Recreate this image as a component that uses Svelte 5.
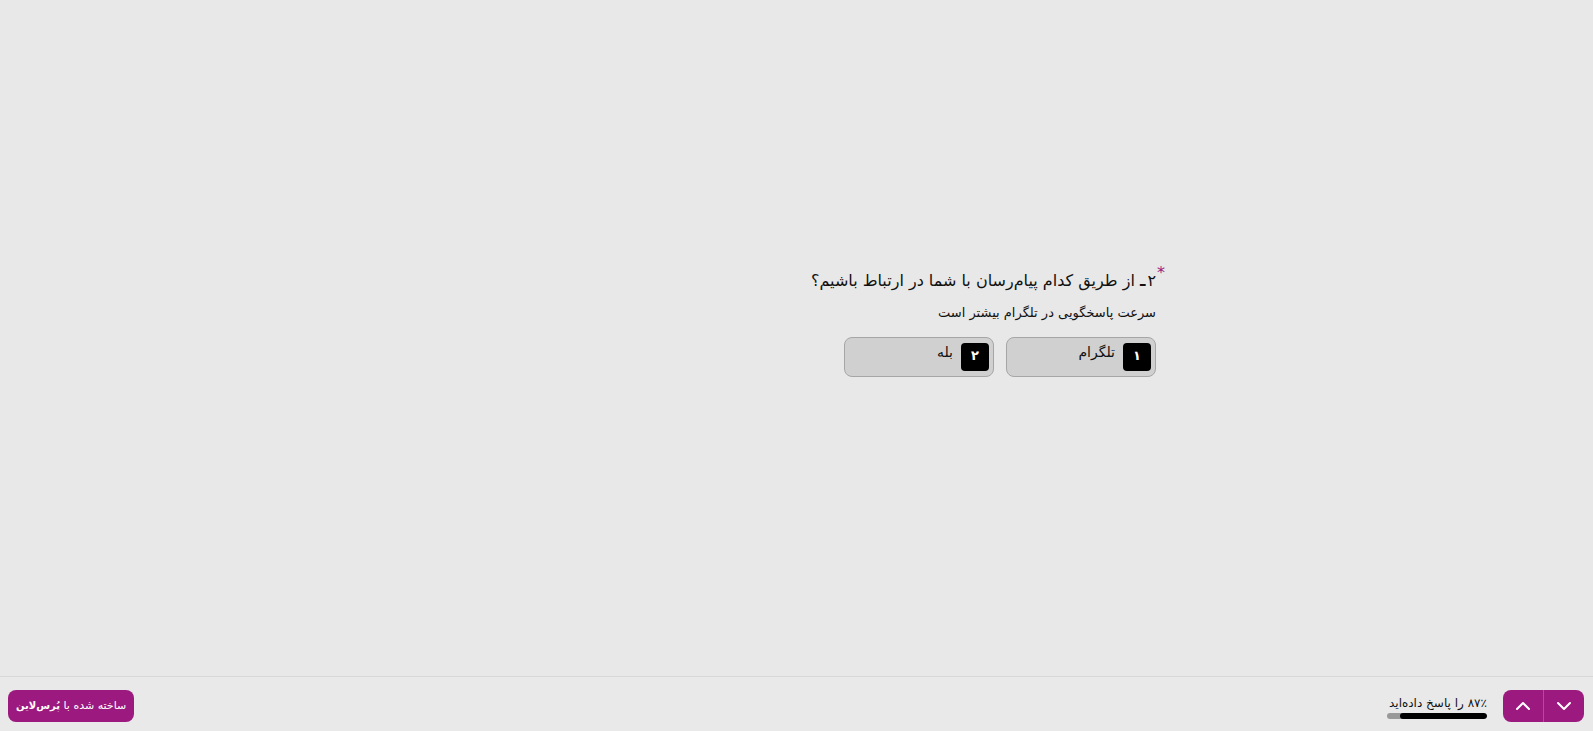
<script>
  const question = {
    number: '۲',
    title: 'از طریق کدام پیام‌رسان با شما در ارتباط باشیم؟',
    description: 'سرعت پاسخگویی در تلگرام بیشتر است',
    required: true,
    choices: [
      { id: 1, key: '۱', label: 'تلگرام' },
      { id: 2, key: '۲', label: 'بله' },
    ],
  };

  let selected = $state(null);
  let progress = $state(87);

  const toPersian = (n) => String(n).replace(/\d/g, (d) => '۰۱۲۳۴۵۶۷۸۹'[d]);
</script>

<div class="survey" dir="rtl" lang="fa">
  <main>
    <form class="question">
      <h1>
        {#if question.required}<span class="required">*</span>{/if}
        <span class="number">{question.number}<span class="dash">ـ</span></span>
        {question.title}
      </h1>
      <p class="description">{question.description}</p>
      <div class="choices">
        {#each question.choices as choice (choice.id)}
          <label class="choice">
            <input type="radio" name="messenger" value={choice.id} bind:group={selected} />
            <span class="key">{choice.key}</span>
            <span class="text">{choice.label}</span>
          </label>
        {/each}
      </div>
    </form>
  </main>

  <footer>
    <div class="nav">
      <button type="button" class="next" aria-label="بعدی">
        <svg viewBox="0 0 16 16" width="16" height="16"><path d="M2 5l6 6 6-6" /></svg>
      </button>
      <button type="button" class="prev" aria-label="قبلی">
        <svg viewBox="0 0 16 16" width="16" height="16"><path d="M2 11l6-6 6 6" /></svg>
      </button>
    </div>
    <div class="progress">
      <span>{toPersian(progress)}٪ را پاسخ داده‌اید</span>
      <div class="track">
        <div class="fill" style="width: {progress}%"></div>
      </div>
    </div>
    <a class="brand" href="#porsline">ساخته شده با <b>پُرس‌لاین</b></a>
  </footer>
</div>

<style>
  :global(body) {
    background: #e8e8e8;
  }

  .survey {
    display: flex;
    flex-direction: column;
    min-height: 100vh;
    color: #111;
    font-family: "DejaVu Sans", sans-serif;
  }

  main {
    flex: 1;
    display: flex;
    align-items: center;
    justify-content: center;
    padding: 0 17px 34px 16px;
  }

  .question {
    width: 100%;
    max-width: 720px;
  }

  h1 {
    position: relative;
    margin: 0;
    font-size: 16px;
    font-weight: 400;
    line-height: 32px;
  }

  .dash {
    margin-right: 2px;
    font-weight: 700;
  }

  .required {
    position: absolute;
    top: -8px;
    right: -9px;
    color: #9c1a7f;
  }

  .description {
    margin: 0 0 8px;
    font-size: 13px;
    line-height: 32px;
  }

  .choices {
    display: flex;
    flex-wrap: wrap;
    gap: 12px;
  }

  .choice {
    position: relative;
    box-sizing: border-box;
    display: flex;
    gap: 8px;
    width: 150px;
    min-height: 40px;
    padding: 5px 4px;
    border: 1px solid #a6a6a6;
    border-radius: 8px;
    background: #d0d0d0;
    cursor: pointer;
  }

  .choice input {
    position: absolute;
    opacity: 0;
    margin: 0;
  }

  .choice:has(input:checked) {
    border-color: #000;
  }

  .key {
    width: 28px;
    height: 28px;
    border-radius: 4px;
    background: #000;
    color: #fff;
    font-size: 13px;
    font-weight: 700;
    line-height: 26px;
    text-align: center;
  }

  .text {
    font-size: 14px;
    line-height: 18px;
  }

  footer {
    box-sizing: border-box;
    display: flex;
    align-items: center;
    gap: 16px;
    min-height: 55px;
    padding: 4px 9px 0 8px;
    border-top: 1px solid #d8d8d8;
    background: #e9e9e9;
  }

  .nav {
    display: flex;
  }

  .nav button {
    box-sizing: content-box;
    display: flex;
    align-items: center;
    justify-content: center;
    width: 40px;
    height: 32px;
    padding: 0;
    border: 0;
    background: #9c1a7f;
    cursor: pointer;
  }

  .nav .next {
    border-radius: 0 8px 8px 0;
  }

  .nav .prev {
    border-right: 1px solid #b34b9b;
    border-radius: 8px 0 0 8px;
  }

  .nav path {
    fill: none;
    stroke: #fff;
    stroke-width: 2;
    stroke-linecap: round;
    stroke-linejoin: round;
  }

  .progress {
    width: 100px;
    font-size: 12px;
    line-height: 20px;
    white-space: nowrap;
  }

  .track {
    height: 6px;
    border-radius: 3px;
    background: #999;
    overflow: hidden;
  }

  .fill {
    height: 100%;
    border-radius: 3px;
    background: #000;
  }

  .brand {
    margin-right: auto;
    padding: 0 8px;
    border-radius: 8px;
    background: #9c1a7f;
    color: #fff;
    font-size: 11px;
    line-height: 32px;
    text-decoration: none;
    white-space: nowrap;
  }

  .brand b {
    font-size: 10px;
  }
</style>
